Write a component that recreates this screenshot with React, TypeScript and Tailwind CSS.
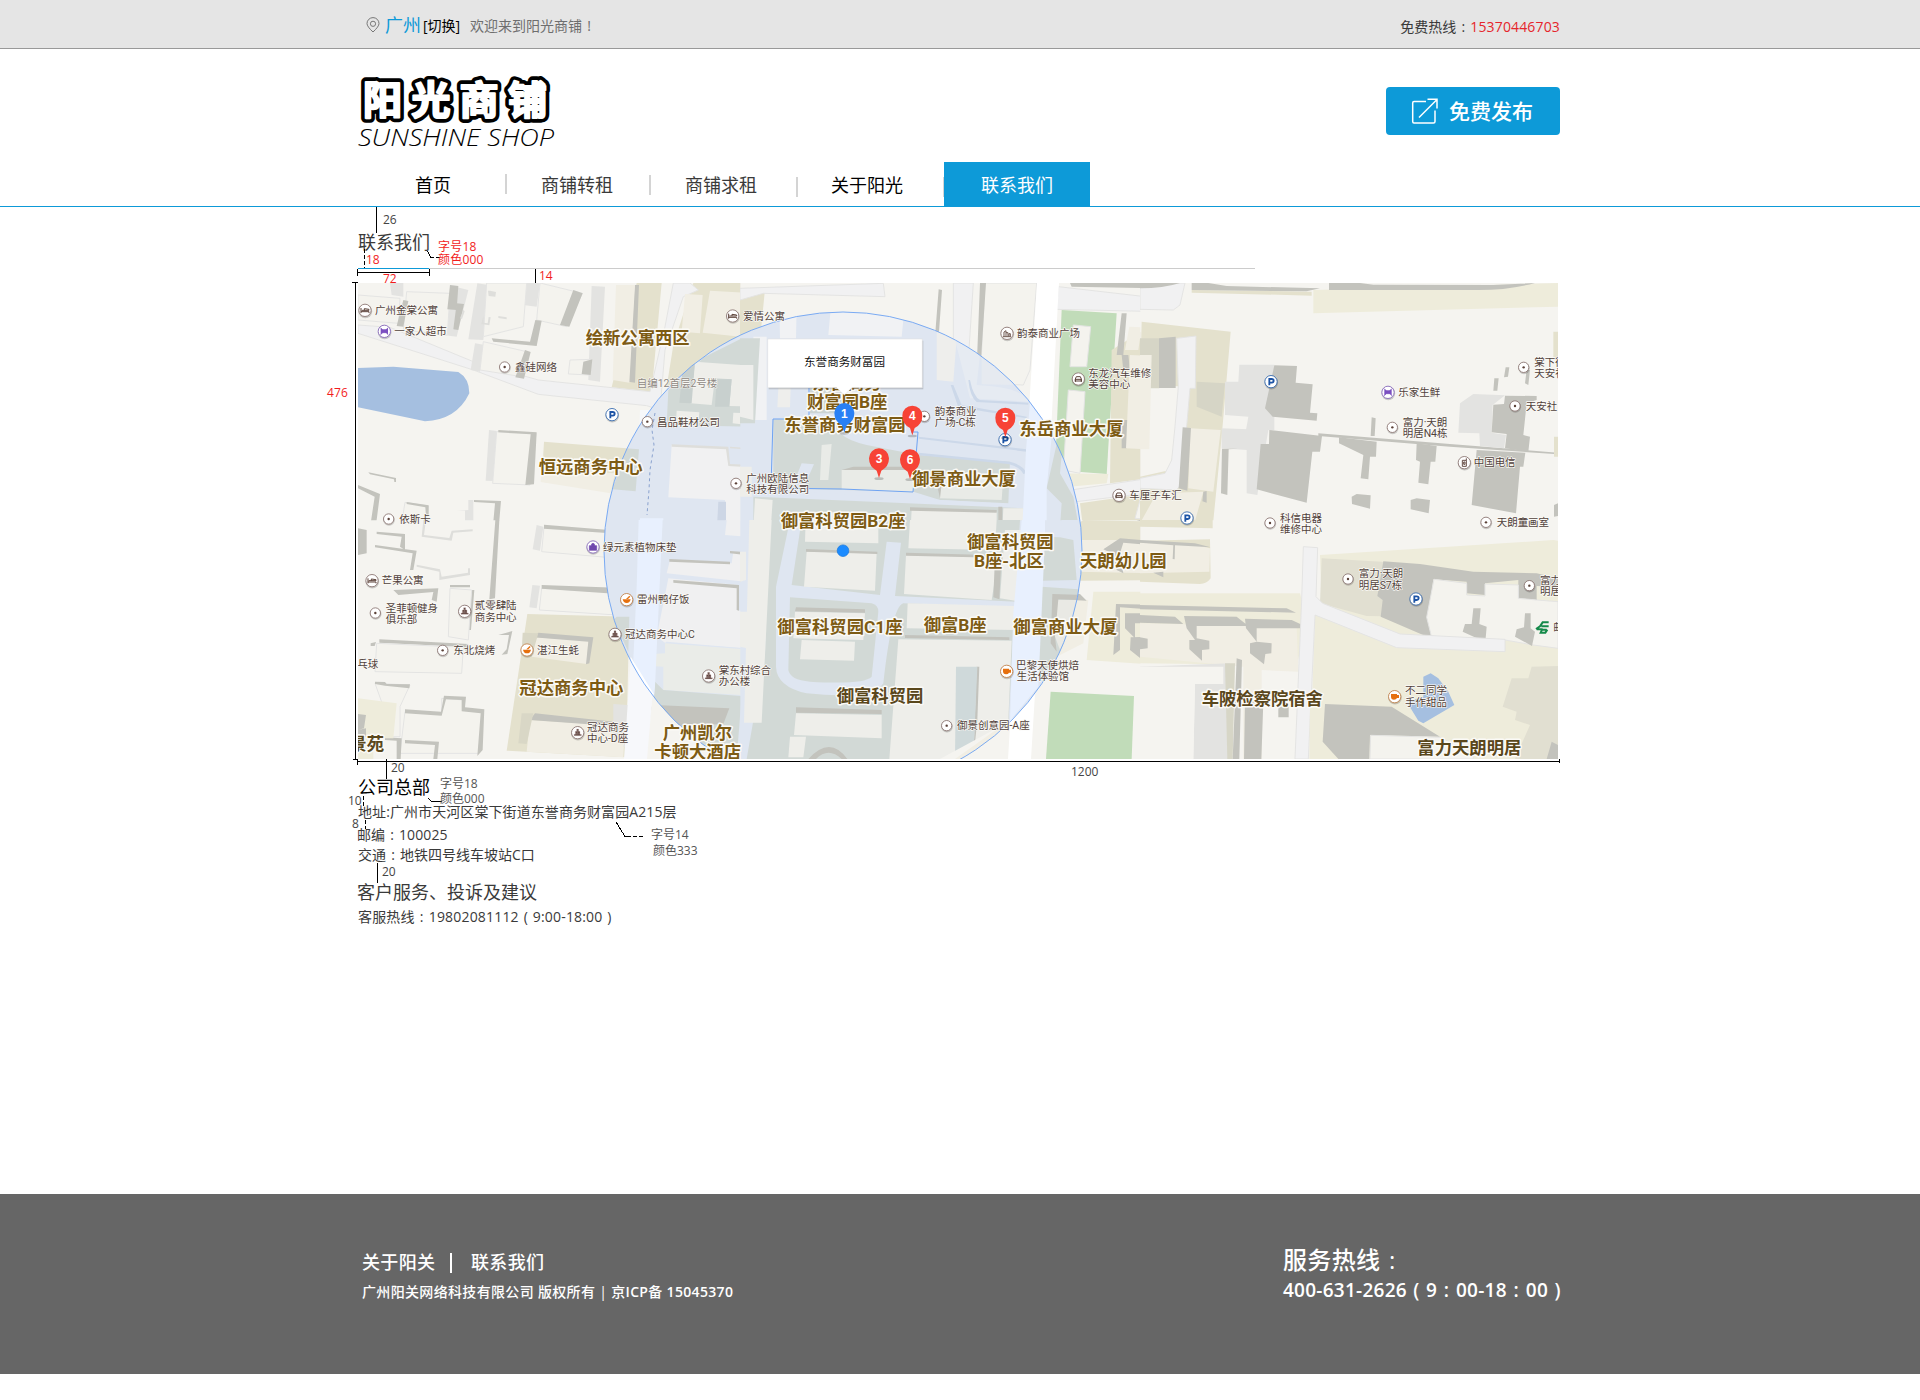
import React from "react";

type Shape = [fill: string, d: string];
type Kind = "dot" | "bed" | "shop" | "bag" | "park" | "tower" | "mall" | "car" | "food" | "cup" | "phone" | "bank";
type Poi = [kind: Kind, x: number, y: number];
type Label = [text: string, x: number, y: number];

/* Map colours */
const LAND = "#f5f4f0";
const BLD = "#f4f3ee";
const CREAM = "#f1eee4";
const LINE = "#dededb";
const SH = "#c3c3bd";
const SHL = "#e3e3e1";
const KH = "#e4e1cd";
const KHL = "#eeecdb";
const ROAD = "#f1f1f2";
const WATER = "#a5bfe0";
const GREEN = "#c1dcb9";
const CIN = "#dfe6f1";
const CG = "#d2d9d6";
const CB = "#eeeeea";
const CR = "#e8f0fe";

/* The map is cut into six sheets; every sheet is drawn at three times its size. */
const SHEETS = [
  { x: 340, y: 270 },
  { x: 740, y: 270 },
  { x: 1140, y: 270 },
  { x: 340, y: 520 },
  { x: 740, y: 520 },
  { x: 1140, y: 520 },
];

const GROUND: Shape[][] = [
  [
    [KH, "M890 39H965L935 365L815 352Z"],
    [KH, "M1060 39L1260 30V215L980 350L1000 225Z"],
    [KH, "M612 515L897 538L887 664L605 635Z"],
    [CREAM, "M605 598L825 610L812 670L602 636Z"],
    [ROAD, "M54 165L150 172L400 275L595 330L930 365L975 170L1000 39H1050L1075 60L1030 80L975 240L960 420L920 407L595 373L400 300L54 190Z"],
    [WATER, "M54 294L160 290L355 306Q388 325 388 370Q350 450 255 454L180 438L54 412Z"],
    [SHL, "M150 39H190V80L155 75ZM345 50L385 60L350 200L310 195ZM412 40L445 45L430 210L385 208Z"],
    [SHL, "M755 48L795 50L780 335L745 330ZM405 220L435 225L420 305L392 300ZM560 39H600L590 110L550 105Z"],
    [BLD, "M54 75L180 85L175 160L54 150ZM200 65L330 70L322 195L190 180ZM440 39H560L550 170L430 200ZM600 39L727 70L680 170L590 150ZM430 215L560 245L545 320L420 300ZM690 270L755 268L750 315L685 312Z"],
    [SH, "M330 45L355 48L350 120L322 118ZM700 60L728 70L688 170L660 165ZM586 150L605 152L590 228L460 215L455 205L570 215ZM555 240L572 246L552 326L526 322ZM884 45L897 45L885 338L866 335Z"],
    [SH, "M730 275L757 268L752 315L725 312ZM190 90L205 93L190 170L170 168ZM350 100L372 102L355 180L340 178Z"],
    [CREAM, "M828 45L885 45L868 338L818 330ZM1035 72L1088 75L1080 190L1025 185ZM1110 62L1250 70L1245 205L1088 188Z"],
    [SHL, "M447 480L470 483L462 633L437 632Z"],
    [BLD, "M470 485L588 490L570 645L458 640Z"],
    [SH, "M475 480L590 487L582 643L556 645L572 493L475 487Z"],
    [SH, "M85 607L168 624L168 636L163 636L162 628L90 613ZM54 645L120 672L108 765L92 760L104 680L54 655Z"],
    [BLD, "M195 697L265 708L258 765L185 760Z"],
    [SH, "M200 696L266 706L266 740L258 740L256 712L200 702ZM402 690L483 693L473 810H455L465 700L402 696Z"],
    [SHL, "M350 722H375V755H400V690H385V720ZM590 765L610 768L600 810H570Z"],
    [SH, "M610 766L850 780L870 800V810L845 790L610 776ZM54 778L80 775V810H54Z"],
    [LINE, "M370 120L360 145L366 147L374 124ZM430 138L424 162L448 166L452 142L446 141L443 160L431 158ZM444 62L446 78L466 80L468 66L450 62ZM475 138L500 142V148L475 144Z"],
  ],
  [
    [KH, "M0 60L75 58L55 260L0 270Z"],
    [ROAD, "M0 55L430 40L435 80L70 70L0 90ZM640 39H700L680 345L640 335Z"],
    [BLD, "M735 39H890L870 300L850 345L720 340Z"],
    [SH, "M596 58L606 60L596 200L585 200ZM720 39H738L718 345H708Z"],
    [ROAD, "M955 50L1260 85V125L950 118Z"],
    [SH, "M990 39H1260V55L995 50Z"],
    [GREEN, "M965 120L1130 130L1100 612L945 600Z"],
    [BLD, "M1000 165L1052 170L1040 290L990 290ZM985 360L1035 365L1020 610L970 600Z"],
    [KH, "M1115 240L1260 150V620L1110 640Z"],
    [SH, "M1145 130L1160 130L1150 255H1130ZM1165 255H1145L1150 300H1170ZM1145 450H1165L1160 535H1145ZM1205 175L1260 180V245H1200Z"],
    [CREAM, "M1168 170L1205 172L1195 240L1155 240ZM1170 255L1232 258L1225 538L1158 535Z"],
    [KHL, "M945 610L1105 612L1100 640L940 655Z"],
    [ROAD, "M860 680L1260 620V665L925 705L900 790Z"],
    [KH, "M1020 700L1260 665V760L1030 780Z"],
    [BLD, "M1200 690L1260 685V750L1185 745Z"],
  ],
  [
    [ROAD, "M0 39H135L120 105L100 120L0 118Z"],
    [KH, "M155 60L515 65V77L155 68Z"],
    [SH, "M155 39H205L260 48L540 55L500 64L155 60ZM0 39H120Q70 55 0 55Z"],
    [KHL, "M520 60L1254 39V110L520 130Z"],
    [SH, "M567 39H660L700 44L1060 45L1185 39Q1100 62 1000 60L567 60Z"],
    [KH, "M5 155L272 185L245 500L218 772L0 765V620L90 600L130 350L0 340Z"],
    ["#d6d5c6", "M0 205H58V355H0ZM170 335L255 340L245 440L170 410Z"],
    [SH, "M57 205L107 200V354H57Z"],
    [ROAD, "M110 205L168 198L166 355L150 355L125 640L110 660L0 655V625L75 610L95 570L105 470L115 350Z"],
    [CREAM, "M0 255H35L28 538H0ZM150 475L242 480L220 665L145 655ZM50 670L190 665L160 770L0 760Z"],
    [SH, "M128 472L153 474L142 662L116 655ZM190 665L200 663V698L187 694Z"],
    [SHL, "M298 284H403V480H318L325 440L255 435V335H295ZM245 475L385 480L352 675L320 670V540L245 535Z"],
    [SH, "M403 286L471 288L467 338L518 343L510 428L532 430L530 452L398 440L375 415ZM388 480L546 498L540 545L517 545L500 698L350 658L362 522L387 522Z"],
    [SH, "M246 536H294L266 538L262 675L243 670ZM597 502L710 515L708 560L690 560L685 628L662 625L670 555L597 520ZM830 520L890 528L886 575L872 575L865 643L835 638L840 575L828 570Z"],
    [SH, "M535 490L930 522L1254 548V553L930 530L535 498ZM635 680L650 672L692 676L690 716L636 702ZM812 690L830 685L870 690L866 730L812 718ZM695 442L707 445L704 498L692 498Z"],
    [SHL, "M960 400L1000 372L1095 376L1058 405L1055 488L1098 495L1092 535L1020 528L1018 490L955 488Z"],
    [SH, "M1095 377L1190 378V390L1160 400L1150 495L1170 500L1165 545L1095 535L1100 492L1055 487L1060 404L1092 402ZM1010 540L1156 548L1150 590L1140 590L1128 730L995 705Z"],
    [SH, "M1097 292L1108 292L1104 320L1092 322ZM1063 325L1076 325L1072 362L1060 362ZM1160 300L1170 300L1165 345L1155 340ZM1242 705L1254 700V738L1242 740Z"],
    [KH, "M1240 185H1254V270L1240 260ZM1242 500H1254V560H1242Z"],
  ],
  [
    [SHL, "M590 15L610 20L600 92L578 88ZM577 195L600 197L590 265L568 262Z"],
    [BLD, "M612 22L845 35L835 115L605 95ZM605 205L840 218L830 285L598 270Z"],
    [SH, "M612 14L845 33L872 48L865 110L838 105L845 42L612 26ZM605 195L870 205L868 222L842 225L832 290L820 285L835 222L605 206Z"],
    [SH, "M466 0H478L465 235L448 238ZM54 25L80 30V100L54 105ZM110 35L195 42V90L180 80L185 50L110 42ZM105 75L230 92L220 150L210 150L218 100L105 82Z"],
    [LINE, "M250 0L245 50L335 62L340 38L398 34V28L335 32L328 54L252 45L258 0ZM230 140L298 155V180L390 165V145L384 145V158L305 170L300 148L230 134Z"],
    [SH, "M160 210L295 205L290 245L275 240L280 216L175 225ZM330 195L390 195V202H330ZM395 210H403L393 330H385ZM118 358L385 372L380 395L365 380L118 368ZM92 370L108 366L104 378L92 378ZM475 345L517 333L502 402L485 404L500 388L507 345Z"],
    [BLD, "M330 205L395 210L385 360L325 350ZM110 370L370 382L365 460L105 455Z"],
    [KH, "M562 282L868 290L858 712L500 692Z"],
    [CREAM, "M580 352L745 362L740 432L575 410ZM570 600L855 618L850 712L560 695Z"],
    [SH, "M595 338L760 352L748 430L738 433L745 365L580 352ZM585 580L850 608L850 620L570 600Z"],
    ["#d9d7c6", "M548 338L595 340L575 410L545 395ZM545 580H580L560 672L535 670Z"],
    [BLD, "M105 490L210 495L180 560V650H140L130 560ZM195 575L305 580V535L370 540V570L430 575L415 700L180 700Z"],
    [SH, "M105 485L135 486L140 492L210 493L208 505L135 497L105 492ZM195 568L303 575L312 527L378 530L375 562L433 568L428 690L412 708L422 580L365 574V540L318 538L305 587L195 580Z"],
    [SH, "M195 660L297 665L292 717H280L285 675L195 670ZM135 652L185 655L182 717H170V662L135 660Z"],
    [KHL, "M54 535L170 550L160 655H100V717H54Z"],
    [SH, "M54 582L78 585L72 625L54 630ZM54 630L78 625V650H54Z"],
    [SHL, "M820 552L935 560L918 680L850 680L855 660L820 655Z"],
  ],
  [
    [KH, "M1030 0L1260 5V180L1020 182L905 180L930 70Z"],
    [CREAM, "M1000 60L1260 60V160L1010 155Z"],
    [SH, "M1090 88L1140 55L1260 65V78L1150 68L1140 100L1150 160L1130 150L1115 100ZM1190 0H1220V8Z"],
    [KHL, "M1060 215H1260V435L1040 420Z"],
    [SHL, "M870 220H935L930 378H865Z"],
    [CREAM, "M945 230L1045 240L1030 370L950 410Z"],
    [SH, "M937 220L1020 222L1040 242L955 238L945 350L952 410L930 370ZM1128 252L1260 255V270L1140 262V390L1120 405ZM1155 280H1260V310H1185V355L1155 325ZM1172 352L1222 350V380L1205 385V418L1170 390Z"],
    [LAND, "M1030 440H1260V717H1180V525L932 515L915 717H870L900 500Z"],
    [GREEN, "M932 515L1182 528L1175 717H918Z"],
  ],
  [
    [KH, "M0 0H218V25L0 20ZM0 62L210 58L212 175Q200 192 180 192L0 185Z"],
    [CREAM, "M0 68L165 75L210 85L208 155L0 160Z"],
    [SH, "M0 60L165 70L212 82L105 76L104 118L98 117L100 76L0 68ZM40 158L70 155V172Z"],
    [KHL, "M0 220L480 220L500 300L470 440L400 435L0 430Z"],
    [CREAM, "M0 310L470 320L475 455L365 450V717H310V440L0 410Z"],
    [SH, "M0 255L440 265L468 278L0 268ZM0 285L105 290L130 312L0 308ZM132 288L290 290L325 318L170 318V355L208 362V388L186 390V422L148 388V360H165L140 325ZM315 296L455 300L508 325L350 325V365L395 370L394 400L376 402L372 433L330 400V370L350 365L318 325ZM0 352L23 356V385L0 388Z"],
    [SHL, "M0 440L270 430L275 520L265 717H160L165 495L0 490Z"],
    [LAND, "M0 440L250 440L250 492L165 492L160 717H0Z"],
    ["#d7d6c7", "M255 430L285 430L278 717H262Z"],
    [SH, "M290 415L306 420L298 717H278ZM315 540L370 545L364 717H312ZM415 560H446V592H415Z"],
    [KHL, "M540 105L1240 60L1254 62V717H510L525 285L545 260Z"],
    ["#e1dfd1", "M545 115L725 125L830 150V290L680 288L540 250Z"],
    [SH, "M730 124L840 132L1000 155L1190 160L1254 175V200L1190 198V240L1135 235V180L1035 190V225L980 220V185L880 178L865 290L875 295L872 355L722 290L728 240L712 228Z"],
    [BLD, "M882 178L980 190V225L1035 228V192L1135 195V235L1190 240L1254 245V385L1180 375L1095 360L875 352L860 292Z"],
    [SH, "M1000 265H1022L1018 312L1040 320L1036 366L968 335L975 312H995ZM1155 280H1172V325L1185 335L1176 378L1125 350L1130 328L1152 322Z"],
    [ROAD, "M490 80L533 83L528 230L548 250L780 342L1095 358V395L770 383L525 285L505 717H465L485 240Z"],
    [WATER, "M850 470L872 460L895 475L925 515L943 555L850 610L835 602L800 545L850 530Z"],
    [KHL, "M510 550H560L548 665L590 717H508Z"],
    ["#e1dfd1", "M1175 440L1254 438V717H1125L1170 615L1125 600L1130 575L1088 560L1115 475H1165Z"],
    [SH, "M555 552L755 560L900 650L690 645L688 717H595L548 665ZM1235 665L1254 675V717H1220Z"],
    [BLD, "M692 646L900 652L1000 700V717H690Z"],
  ],
];

const INNER: Shape[][] = [
  [
    [CG, "M1260 178L1092 262L985 360L980 465L1250 470V178Z"],
    [CB, "M1065 275L1245 288L1232 410L1168 408L1175 328L1125 325L1115 405L1052 400ZM1010 422L1078 427L1075 465L1008 460ZM1180 428L1235 430L1230 465L1178 460Z"],
    ["#c8d0ce", "M1030 275H1065L1055 400L1018 398ZM1130 328H1175L1168 410H1125Z"],
    [CG, "M848 570L855 535L897 538L887 664L818 658Z"],
    [CR, "M900 745L970 745L967 810H895Z"],
    ["#f1f1f2", "M995 525L1160 532L1165 585L1235 590L1220 810H1155V690L985 682Z"],
    [LINE, "M995 523L1165 530L1170 582L1235 585V592L1165 588L1158 538L995 530ZM1170 530L1240 535V540L1170 535Z"],
    ["#cdd6e5", "M1135 695H1158V790H1130Z"],
  ],
  [
    ["#f1f2f4", "M275 85L495 100L485 200L265 195ZM118 105L170 110L168 205H120ZM40 200H80V450H40Z"],
    [CG, "M0 205H60L45 460H0Z"],
    ["#eeeeec", "M0 285H40V450L0 440ZM115 355L152 355L150 412H112ZM590 130L650 205L640 335L590 330Z"],
    ["#e6ebf2", "M645 210L720 255L710 345Q850 352 865 395L690 385Z"],
    ["#e6eaf0", "M725 262L830 345L725 343Z"],
    [CG, "M100 448H300Q270 500 380 525L535 555L810 575L805 700L600 690L520 665L100 655Z"],
    ["#ccd4d3", "M210 355H310V430H210Z"],
    ["#e9ebe7", "M305 600L520 600V668L305 658ZM245 525L275 522L265 630H240ZM600 610L790 620L785 690L600 685Z"],
    [SH, "M305 600L340 590H520V600ZM590 640L605 642L600 685Z"],
    [CIN, "M185 580L222 583L190 655H155ZM0 655L860 705V720L0 680Z"],
    ["#ccd8e9", "M536 500L860 538V545L536 506ZM536 548L810 575Q850 585 860 610L850 612Q840 590 805 582L536 556ZM632 345H640L665 405L860 440V445L655 412ZM685 330H690Q700 380 720 390L865 398V404L710 396Q690 380 685 330Z"],
    [CG, "M40 680L850 715V810H40Z"],
    [CB, "M0 590H35V680H0ZM45 685L98 690L90 810H38ZM210 725L420 730L415 810H200ZM515 718L770 725V810H510ZM790 715H850V810H785Z"],
    [SH, "M510 712L770 720V728L510 722ZM775 710H787V810H775Z"],
    [CG, "M955 500H970L960 610L1000 680L1020 790L960 770L965 700L920 655Z"],
    [CR, "M870 395L905 450L935 500L920 655V810H845L858 540Z"],
  ],
  [],
  [
    ["#f0f0f1", "M990 120L1175 130L1180 95L1220 98L1212 185L980 160ZM985 175L1195 195L1190 270L1218 275L1212 385L975 368L950 350ZM1160 0H1220V50L1155 45Z"],
    [SH, "M988 117L1170 125V133L988 125ZM1170 93L1222 96L1212 185H1200L1212 104L1170 100ZM1000 180L1197 195V272L1190 270V205L1000 188Z"],
    [CIN, "M980 365L1215 385L1190 560H940L935 400Z"],
    ["#eaece8", "M975 370L1215 388L1205 525L970 510V440L935 438L940 402L975 400Z"],
    [CG, "M945 485L970 510L1205 528L1190 717H1090L940 560ZM830 290H868L865 395L820 300Z"],
    [CR, "M896 0H968L945 500L940 550L880 420L890 200Z"],
    ["#ffffff", "M872 410L940 520V560L865 565Z"],
    [SH, "M945 555L1168 565L1150 612L915 622Z"],
    [CREAM, "M918 620L990 620V717H910Z"],
    [CB, "M1220 0H1260V605H1212Z"],
  ],
  [
    [CG, "M85 0H840L820 330L800 717H20L75 400Z"],
    [CB, "M28 0H95L65 608H12ZM0 95H18V180L0 185ZM0 275H22V385L0 380Z"],
    [CIN, "M150 0H185L155 195L420 225L440 65L483 68L465 228L830 245L825 262L490 250Q455 260 430 490Q400 540 200 520Q110 500 108 440V200Z"],
    [CG, "M150 232L395 250Q415 255 415 275L395 470Q370 495 210 485Q150 480 145 450Z"],
    [CB, "M197 0H415V70L195 65ZM200 95L410 98L405 212L192 200ZM165 275L375 280L370 360L160 355ZM185 360L345 365L342 422L180 418ZM510 0H770L765 90L505 85ZM498 105L775 112L755 240L492 222ZM795 30H850L830 243L780 235ZM503 250L825 258V330L500 325ZM475 358L815 362L800 717H448ZM168 580L425 585V655L162 645ZM150 650H198L190 712H145Z"],
    [SH, "M198 87L412 95V102L198 95ZM168 262L375 268V278L165 274ZM498 98L770 106V113L498 107ZM495 345L808 352V360L495 354ZM168 562L425 570V582L168 578ZM772 100L785 102L778 238L760 232L765 110ZM710 440H718L712 600L700 717ZM205 717Q270 645 322 717H305Q265 680 228 717Z"],
    ["#cfd9da", "M648 440H712L700 717H645Z"],
    [CIN, "M905 180L1020 185L1015 208L905 200ZM915 45L960 50L965 0H1020V20L960 52L915 50Z"],
    [CG, "M915 50L960 52L1000 60L1010 180L905 182ZM905 200L1015 208Q1000 330 950 420L880 480V220Z"],
    ["#e9e9e4", "M950 240L1012 240Q1000 300 960 390L945 350Z"],
    [SH, "M937 222L1012 224L1010 240L955 238L945 350L950 395L932 370Z"],
    [CR, "M845 0H915V50L895 500L810 602L820 280Z"],
    [CREAM, "M700 717L800 615V717Z"],
  ],
  [],
];

const POIS: Poi[][] = [
  [["bed", 75, 121], ["shop", 133, 184], ["dot", 494, 291], ["bed", 1178, 138], ["park", 816, 434], ["dot", 922, 455], ["dot", 1188, 640], ["dot", 146, 747]],
  [["mall", 801, 190], ["car", 1015, 327], ["dot", 553, 439], ["park", 795, 509], ["car", 1137, 676]],
  [["park", 393, 335], ["shop", 744, 367], ["dot", 757, 472], ["dot", 1151, 292], ["dot", 1125, 408], ["phone", 973, 578], ["park", 141, 744], ["dot", 390, 759], ["dot", 1038, 757]],
  [["bag", 759, 81], ["bed", 96, 182], ["dot", 106, 279], ["tower", 374, 274], ["food", 860, 239], ["tower", 825, 343], ["food", 561, 390], ["dot", 308, 391], ["tower", 1106, 468], ["tower", 713, 638]],
  [["cup", 800, 454], ["dot", 620, 617]],
  [["dot", 624, 177], ["park", 828, 237], ["dot", 1168, 197], ["bank", 1208, 323], ["cup", 764, 530]],
];

const SMALL: Label[][] = [
  [["广州金棠公寓", 105, 121], ["一家人超市", 163, 184], ["鑫硅网络", 525, 291], ["爱情公寓", 1209, 138], ["昌品鞋材公司", 951, 456], ["广州欧陆信息", 1219, 624], ["科技有限公司", 1219, 658], ["依斯卡", 178, 748]],
  [["韵泰商业广场", 831, 190], ["东龙汽车维修", 1045, 309], ["美容中心", 1045, 343], ["韵泰商业", 584, 424], ["广场-C栋", 584, 456], ["车厘子车汇", 1168, 676]],
  [["乐家生鲜", 775, 367], ["富力·天朗", 788, 456], ["明居N4栋", 788, 490], ["棠下街", 1183, 277], ["天安社", 1183, 311], ["天安社", 1157, 409], ["中国电信", 1001, 578], ["科信电器", 420, 744], ["维修中心", 420, 777], ["天朗童画室", 1070, 757]],
  [["绿元素植物床垫", 789, 81], ["芒果公寓", 125, 182], ["圣菲顿健身", 137, 266], ["俱乐部", 137, 297], ["贰零肆陆", 404, 257], ["商务中心", 404, 291], ["雷州鸭仔饭", 891, 239], ["冠达商务中心C", 855, 343], ["湛江生蚝", 591, 390], ["东北烧烤", 340, 391], ["乓球", 52, 433], ["棠东村综合", 1136, 451], ["办公楼", 1136, 485], ["冠达商务", 741, 621], ["中心-D座", 741, 656]],
  [["巴黎天使烘焙", 828, 436], ["生活体验馆", 830, 470], ["御景创意园-A座", 651, 617]],
  [["富力·天朗", 656, 161], ["明居S7栋", 656, 195], ["富力", 1200, 181], ["明居", 1200, 215], ["邮", 1240, 323], ["不二同学", 795, 512], ["手作甜品", 795, 546]],
];

const BIG: Label[][] = [
  [["绘新公寓西区", 737, 205], ["恒远商务中心", 596, 592]],
  [["东誉商务", 217, 338], ["财富园B座", 201, 395], ["东誉商务财富园", 133, 465], ["东岳商业大厦", 838, 476], ["御景商业大厦", 516, 627], ["御富科贸园B2座", 122, 754]],
  [],
  [["冠达商务中心", 538, 503], ["广州凯尔", 968, 638], ["卡顿大酒店", 943, 697]],
  [["御富科贸园", 681, 65], ["B座-北区", 702, 123], ["天朗幼儿园", 1020, 123], ["御富科贸园C1座", 112, 322], ["御富B座", 551, 314], ["御富商业大厦", 820, 322]],
  [],
];

const DARK: Label[][] = [
  [],
  [],
  [],
  [["景苑", 28, 673]],
  [["御富科贸园", 290, 528]],
  [["车陂检察院宿舍", 185, 538], ["富力天朗明居", 832, 684]],
];

const PINS: [string, number, number, string][] = [
  ["1", 313, 488, "#2980f5"],
  ["4", 517, 496, "#f74336"],
  ["5", 796, 502, "#f74336"],
  ["3", 417, 624, "#f74336"],
  ["6", 510, 627, "#f74336"],
];

const MAP_FONT = "font-['Roboto','Noto_Sans_CJK_SC',sans-serif]";

function PoiIcon({ kind, x, y }: { kind: Kind; x: number; y: number }) {
  const t = `translate(${x} ${y})`;
  if (kind === "bank")
    return (
      <g transform={t} fill="none" stroke="#158a4a" strokeWidth="6">
        <path d="M18 -16H0L-8 -4L-20 4M18 -4H-4M12 6H-2L-6 15H8L14 6M-18 5L0 5" />
      </g>
    );
  const ring =
    kind === "park" ? "#2f66ad" : kind === "shop" || kind === "bag" ? "#8262b8" : kind === "food" || kind === "cup" ? "#c08048" : "#8a7470";
  const r = kind === "dot" ? 15.5 : 18.5;
  return (
    <g transform={t}>
      <circle cx="1" cy="3" r={r + 2} fill="#000" opacity=".18" />
      <circle r={r} fill="#fff" stroke={ring} strokeWidth="2.6" />
      {kind === "dot" && <circle r="3.6" fill="#5b4138" />}
      {kind === "park" && <path d="M-5 11V-8H2Q8 -8 8 -3T2 3H-5" fill="none" stroke="#1d54a6" strokeWidth="5.5" />}
      {kind === "bed" && <path d="M-12 -7V8M-12 4H12V8M-10 0H12V-3L-2 -5V0" fill="none" stroke="#5b4138" strokeWidth="3" />}
      {kind === "shop" && <path d="M-11 -10L-6 -6V5L-11 10M11 -10L6 -6V4L11 10M-6 -5H6V4H-6" fill="#7b4fc0" stroke="#7b4fc0" strokeWidth="2.2" />}
      {kind === "bag" && <path d="M-11 -4H11V10H-11ZM-5 -4Q-5 -11 0 -11T5 -4" fill="#7048ad" stroke="#7048ad" strokeWidth="2" />}
      {kind === "tower" && <path d="M-3 -11H3V-4H7V5H11V9H-11V5H-7V-4H-3ZM0 -7V6M-4 0V6M4 0V6" fill="#5b3f3a" stroke="#cbb9b5" strokeWidth="1.2" />}
      {kind === "mall" && <path d="M-9 9V-4L-3 -8V9M-3 -2H3V9M6 9V1H10V9M-12 10H12" fill="none" stroke="#5b4138" strokeWidth="2.6" />}
      {kind === "car" && <path d="M-9 9V0L-6 -7H6L9 0V9M-9 1H9V6H-9Z" fill="none" stroke="#5b4138" strokeWidth="3" />}
      {kind === "food" && <path d="M-12 -1H12Q10 10 0 10T-12 -1ZM-2 -2L8 -12L11 -9L4 -2Z" fill="#e6700f" />}
      {kind === "cup" && <path d="M-11 -8H7V-5H13V4H7Q5 9 -2 9Q-11 9 -11 0Z" fill="#e6700f" />}
      {kind === "phone" && <path d="M-6 -7H6V11H-6ZM6 -7V-13M-2 -2H2V5H-2Z" fill="none" stroke="#5b4138" strokeWidth="2.8" />}
    </g>
  );
}

function Layer({ children }: { children: (sheet: number) => React.ReactNode }) {
  return (
    <>
      {SHEETS.map((s, i) => (
        <g key={i} transform={`translate(${s.x} ${s.y}) scale(.33333)`}>
          {children(i)}
        </g>
      ))}
    </>
  );
}

function Labels({ items, size, className, fill, halo }: { items: Label[]; size: number; className: string; fill: string; halo: number }) {
  return (
    <>
      {items.map(([text, x, y], i) => (
        <text
          key={i}
          x={x}
          y={y + size * 0.345}
          fontSize={size}
          fill={fill}
          stroke="#fbfaf6"
          strokeWidth={halo}
          strokeLinejoin="round"
          paintOrder="stroke"
          className={className}
        >
          {text}
        </text>
      ))}
    </>
  );
}

function CityMap() {
  return (
    <svg className="block h-[476px] w-[1200px]" viewBox="358 283 1200 476">
      <defs>
        <clipPath id="area">
          <circle cx="843" cy="551" r="239" />
        </clipPath>
        {SHEETS.map((s, i) => (
          <clipPath key={i} id={`sheet${i}`}>
            <rect x="0" y="0" width={i % 3 === 2 ? 1290 : 1201} height={i < 3 ? 751 : 720} />
          </clipPath>
        ))}
      </defs>
      <rect x="358" y="283" width="1200" height="476" fill={LAND} />
      <Layer>
        {(i) => (
          <g clipPath={`url(#sheet${i})`}>
            {GROUND[i].map(([f, d], k) => (
              <path key={k} d={d} fill={f} stroke={f === ROAD || f === BLD ? "#e4e4e3" : "none"} strokeWidth="3" />
            ))}
          </g>
        )}
      </Layer>
      <path d="M1037 283H1059L1050 450L1045 530L1031 759H1008L1020 560L1027 440Z" fill="#fff" />
      <path d="M640 410L664 410L653 690L647 759H624L632 640Z" fill="#f7f8fb" />
      <g clipPath="url(#area)">
        <rect x="600" y="310" width="490" height="449" fill={CIN} />
        <Layer>
          {(i) => (
            <g clipPath={`url(#sheet${i})`}>
              {INNER[i].map(([f, d], k) => (
                <path key={k} d={d} fill={f} />
              ))}
            </g>
          )}
        </Layer>
        {/* Plots on the lower right rim keep their own colours */}
        <path d="M1010 721L1100 640V759H940Z" fill={LAND} />
        <path d="M1010 721L1031 700L1028 759H1008Z" fill="#fff" />
        <path d="M955 759L1007 722L1006 759Z" fill={CREAM} />
      </g>
      <g fill="none" stroke="#6ea3f3" strokeWidth="1">
        <circle cx="843" cy="551" r="239" strokeOpacity=".9" />
        <path d="M811 419H773L771 488L842 489L913 492L918 432H911M809 388V416" />
      </g>
      <path d="M655 413L652 430L654 445L650 470L649 490L647 515" fill="none" stroke="#8aa2cf" strokeWidth="1" strokeDasharray="3 3" />
      <Layer>
        {(i) => (
          <>
            {POIS[i].map(([k, x, y], n) => (
              <PoiIcon key={n} kind={k} x={x} y={y} />
            ))}
            <Labels items={SMALL[i]} size={31.5} fill="#50413b" halo={4} className={`font-normal ${MAP_FONT}`} />
            <Labels items={BIG[i]} size={52} fill="#7d5b14" halo={9} className={`font-bold ${MAP_FONT}`} />
            <Labels items={DARK[i]} size={52} fill="#5a471c" halo={9} className={`font-bold ${MAP_FONT}`} />
          </>
        )}
      </Layer>
      <g transform="translate(340 270) scale(.33333)">
        <Labels items={[["自编12首层2号楼", 890, 341]]} size={31.5} fill="#8e8883" halo={3} className={`font-normal ${MAP_FONT}`} />
      </g>
      <g transform="translate(740 270) scale(.33333)">
        <rect x="86" y="212" width="464" height="146" fill="#000" opacity=".16" />
        <path d="M83 207H547V353H336L313 375L290 353H83Z" fill="#fff" stroke="#dcdcdc" strokeWidth="1.5" />
        <text x="192" y="289" fontSize="34.8" fill="#111" className={`font-normal ${MAP_FONT}`}>
          东誉商务财冨园
        </text>
        {PINS.map(([n, x, y, c]) => (
          <g key={n} transform={`translate(${x} ${y})`}>
            <ellipse cx="0" cy="2" rx="14" ry="4" fill="#000" opacity=".2" />
            <path d="M0 0L-7 -22Q-30 -34 -30 -59A30 30 0 0 1 30 -59Q30 -34 7 -22Z" fill={c} />
            <text x="0" y="-45" fontSize="36" textAnchor="middle" fill="#fff" className="font-bold font-['Liberation_Sans',sans-serif]">
              {n}
            </text>
          </g>
        ))}
      </g>
      <circle cx="843" cy="550.7" r="5.8" fill="#1b8bff" stroke="#1677dd" strokeWidth=".7" />
    </svg>
  );
}

/* Punctuation set in the middle of a full-width square */
function Mid({ children }: { children: string }) {
  return <span className="inline-block w-[1em] text-center">{children}</span>;
}

function Logo() {
  return (
    <svg className="block h-[93px] w-[206px]" viewBox="354 60 206 93">
      {[
        ["#000", 9.5],
        ["#fff", 2.2],
      ].map(([c, w]) => (
        <text
          key={c}
          y="113.5"
          fontSize="39"
          fill={c}
          stroke={c}
          strokeWidth={w}
          strokeLinejoin="round"
          className="font-bold font-['Noto_Sans_CJK_SC',sans-serif]"
        >
          <tspan x="363">阳</tspan>
          <tspan x="411.5">光</tspan>
          <tspan x="459.5">商</tspan>
          <tspan x="508">铺</tspan>
        </text>
      ))}
      <text
        x="358"
        y="146"
        fontSize="23"
        fill="#000"
        textLength="196"
        lengthAdjust="spacingAndGlyphs"
        className="font-light italic font-['Open_Sans',sans-serif]"
      >
        SUNSHINE SHOP
      </text>
    </svg>
  );
}

function Note({ className, children }: { className: string; children: string }) {
  return <span className={`absolute whitespace-nowrap text-xs leading-3 ${className}`}>{children}</span>;
}

/* Dimension marks laid over the page */
function Redlines() {
  return (
    <div className="pointer-events-none absolute inset-0">
      <svg className="absolute inset-0 h-[1400px] w-[1920px]" fill="none" stroke="#000" strokeWidth="1" shapeRendering="crispEdges">
        <path d="M376.5 207V233M535.5 269V283M357 272.5H430M357.5 269V276M429.5 269V276" />
        <path d="M355.5 282V759M352 282.5H358M353 759.5H358M357 761.5H1559M357.5 760V765M386.5 759V779M377.5 863V883" />
        <path d="M364.5 249V268M363.5 796V806M365.5 820V829M1559.5 759V765" strokeDasharray="4 2" />
        <path d="M427.5 251L431 257.5H434M436 257.5H440M428 798L431.5 801.5H442M616 822L625 836.5H631M633 836.5H637M639 836.5H643" />
      </svg>
      <Note className="left-[383px] top-[214px] text-[#444]">26</Note>
      <Note className="left-[366px] top-[254px] text-[#f21d1d]">18</Note>
      <Note className="left-[438px] top-[241px] tracking-[.2px] text-[#f21d1d]">字号18</Note>
      <Note className="left-[438px] top-[254px] tracking-[.2px] text-[#f21d1d]">颜色000</Note>
      <Note className="left-[383px] top-[273px] text-[#f21d1d]">72</Note>
      <Note className="left-[539px] top-[270px] text-[#f21d1d]">14</Note>
      <Note className="left-[327px] top-[387px] tracking-[.2px] text-[#f21d1d]">476</Note>
      <Note className="left-[1071px] top-[766px] text-[#444]">1200</Note>
      <Note className="left-[391px] top-[762px] text-[#444]">20</Note>
      <Note className="left-[440px] top-[778px] text-[#555]">字号18</Note>
      <Note className="left-[440px] top-[793px] text-[#555]">颜色000</Note>
      <Note className="left-[348px] top-[795px] text-[#444]">10</Note>
      <Note className="left-[352px] top-[818px] text-[#444]">8</Note>
      <Note className="left-[651px] top-[829px] text-[#555]">字号14</Note>
      <Note className="left-[653px] top-[845px] text-[#555]">颜色333</Note>
      <Note className="left-[382px] top-[866px] text-[#444]">20</Note>
    </div>
  );
}

export default function App() {
  return (
    <div className="relative h-[1400px] w-[1920px] overflow-hidden bg-white font-normal text-[#3a3a3a] font-['Open_Sans','Noto_Sans_CJK_SC',sans-serif]">
      <header>
        <div className="flex h-[49px] items-start justify-between border-b border-[#999] bg-[#e5e5e5] pl-[366px] pr-[360px]">
          <div className="flex">
            <svg className="mt-[17px] h-[16px] w-[14px]" viewBox="0 0 14 16" fill="none" stroke="#777" strokeWidth="1">
              <path d="M7 15Q1 9.5 1 6.5A6 5.9 0 0 1 13 6.5Q13 9.5 7 15Z" />
              <circle cx="7" cy="6.8" r="2.6" />
            </svg>
            <span className="ml-[5px] mt-[16px] w-[38px] text-[18px] leading-[18px] text-[#0d9ad8]">广州</span>
            <span className="mt-[19px] w-[47px] text-sm leading-[14px] text-black">[切换]</span>
            <span className="mt-[19px] text-sm leading-[14px] text-[#6e6e6e]">
              欢迎来到阳光商铺<Mid>!</Mid>
            </span>
          </div>
          <div className="mt-[20px] text-sm leading-[14px]">
            免费热线<Mid>:</Mid>
            <span className="tracking-[.15px] text-[#e5252b]">15370446703</span>
          </div>
        </div>

        <div className="flex h-[113px] items-start justify-between pl-[354px] pr-[360px]">
          <div className="mt-[11px]">
            <Logo />
          </div>
          <button className="mt-[38px] flex h-[48px] w-[174px] items-center rounded bg-[#0d9ad8] pl-[25px] text-white">
            <svg className="h-[28px] w-[28px]" viewBox="0 0 28 28" fill="none" stroke="#fff" strokeWidth="1.5">
              <path d="M15 4.5H3Q1.7 4.5 1.7 6V24.5Q1.7 26 3 26H22.500Q24 26 24 24.500V13.500M8 20.500L25.500 3M16.500 2.300H26V11.500" />
            </svg>
            <span className="ml-[10px] text-[21px] font-medium leading-[21px]">免费发布</span>
          </button>
        </div>

        <nav className="flex h-[45px] border-b border-[#0d9ad8] pl-[358px] text-[18px] leading-[18px]">
          <a className="w-[147px] pl-[57px] pt-[14px] text-black">首页</a>
          <i className="mt-[12px] h-[20px] w-0.5 bg-[#d4d4d4]" />
          <a className="w-[142px] pl-[34px] pt-[14px]">商铺转租</a>
          <i className="mt-[13px] h-[20px] w-0.5 bg-[#d4d4d4]" />
          <a className="w-[145px] pl-[34px] pt-[14px]">商铺求租</a>
          <i className="mt-[15px] h-[20px] w-0.5 bg-[#d4d4d4]" />
          <a className="w-[145px] pl-[33px] pt-[14px] text-black">关于阳光</a>
          <i className="mt-[15px] h-[20px] w-px bg-[#d4d4d4]" />
          <a className="w-[146px] bg-[#0d9ad8] pl-[37px] pt-[14px] text-white">联系我们</a>
        </nav>
      </header>

      <main className="ml-[358px] h-[987px] w-[1200px]">
        <h1 className="h-[61px] pt-[26px] text-[18px] leading-[18px]">联系我们</h1>
        <div className="mb-[14px] h-px w-[897px] bg-[#ccc]">
          <div className="h-px w-[71px] bg-[#0d9ad8]" />
        </div>
        <CityMap />
        <section className="flex flex-col pt-[19px] text-sm leading-[14px]">
          <h2 className="text-[18px] leading-[18px] text-black">公司总部</h2>
          <p className="mt-[9px] tracking-[.08px]">地址:广州市天河区棠下街道东誉商务财富园A215层</p>
          <p className="-ml-px mt-[9px]">
            邮编<Mid>:</Mid>
            <span className="tracking-[.1px]">100025</span>
          </p>
          <p className="mt-[6px]">
            交通<Mid>:</Mid>地铁四号线车坡站C口
          </p>
          <h2 className="-ml-px mt-[21px] text-[18px] leading-[18px]">客户服务、投诉及建议</h2>
          <p className="mt-[9px] tracking-[.18px]">
            客服热线<Mid>:</Mid>19802081112<Mid>(</Mid>9:00-18:00<Mid>)</Mid>
          </p>
        </section>
      </main>

      <footer className="flex h-[180px] justify-between bg-[#666] pl-[362px] font-medium tracking-[.33px] text-white">
        <div className="pt-[59px]">
          <div className="flex text-[18px] leading-[18px]">
            <a className="w-[88px]">关于阳关</a>
            <i className="h-[20px] w-0.5 bg-white" />
            <a className="ml-[19px]">联系我们</a>
          </div>
          <p className="mt-[12px] text-sm leading-[14px]">
            广州阳关网络科技有限公司 版权所有 | 京<span className="font-semibold">ICP</span>备 <span className="font-semibold">15045370</span>
          </p>
        </div>
        <div className="w-[637px] whitespace-nowrap pt-[54px]">
          <p className="text-[24px] leading-[24px]">
            服务热线<Mid>:</Mid>
          </p>
          <p className="mt-[9px] text-[19px] font-semibold leading-[19px] tracking-[.25px]">
            400-631-2626<Mid>(</Mid>9<Mid>:</Mid>00-18<Mid>:</Mid>00<Mid>)</Mid>
          </p>
        </div>
      </footer>

      <Redlines />
    </div>
  );
}
